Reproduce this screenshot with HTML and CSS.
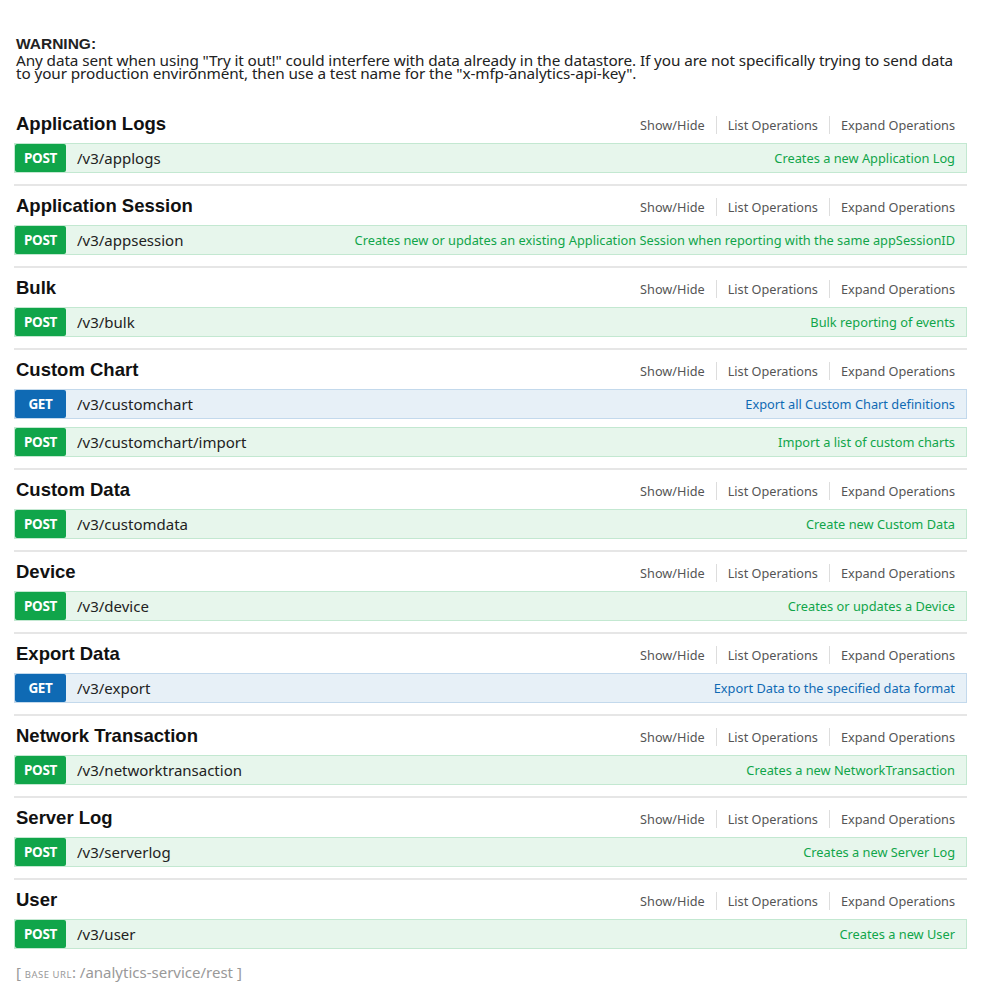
FILE: index.html
```html
<!DOCTYPE html>
<html>
<head>
<meta charset="utf-8">
<link rel="stylesheet" href="styles.css">
<title>API</title>
</head>
<body>
<div class="page">
  <div class="warning">
    <div class="warning-title">WARNING:</div>
    <div class="warning-text">Any data sent when using "Try it out!" could interfere with data already in the datastore. If you are not specifically trying to send data to your production environment, then use a test name for the "x-mfp-analytics-api-key".</div>
  </div>

  <ul class="resources">
    <li class="resource">
      <div class="res-head"><h2>Application Logs</h2><ul class="options"><li>Show/Hide</li><li>List Operations</li><li>Expand Operations</li></ul></div>
      <div class="op post"><span class="method">POST</span><span class="path">/v3/applogs</span><span class="desc">Creates a new Application Log</span></div>
    </li>
    <li class="resource">
      <div class="res-head"><h2>Application Session</h2><ul class="options"><li>Show/Hide</li><li>List Operations</li><li>Expand Operations</li></ul></div>
      <div class="op post"><span class="method">POST</span><span class="path">/v3/appsession</span><span class="desc">Creates new or updates an existing Application Session when reporting with the same appSessionID</span></div>
    </li>
    <li class="resource">
      <div class="res-head"><h2>Bulk</h2><ul class="options"><li>Show/Hide</li><li>List Operations</li><li>Expand Operations</li></ul></div>
      <div class="op post"><span class="method">POST</span><span class="path">/v3/bulk</span><span class="desc">Bulk reporting of events</span></div>
    </li>
    <li class="resource">
      <div class="res-head"><h2>Custom Chart</h2><ul class="options"><li>Show/Hide</li><li>List Operations</li><li>Expand Operations</li></ul></div>
      <div class="op get"><span class="method">GET</span><span class="path">/v3/customchart</span><span class="desc">Export all Custom Chart definitions</span></div>
      <div class="op post"><span class="method">POST</span><span class="path">/v3/customchart/import</span><span class="desc">Import a list of custom charts</span></div>
    </li>
    <li class="resource">
      <div class="res-head"><h2>Custom Data</h2><ul class="options"><li>Show/Hide</li><li>List Operations</li><li>Expand Operations</li></ul></div>
      <div class="op post"><span class="method">POST</span><span class="path">/v3/customdata</span><span class="desc">Create new Custom Data</span></div>
    </li>
    <li class="resource">
      <div class="res-head"><h2>Device</h2><ul class="options"><li>Show/Hide</li><li>List Operations</li><li>Expand Operations</li></ul></div>
      <div class="op post"><span class="method">POST</span><span class="path">/v3/device</span><span class="desc">Creates or updates a Device</span></div>
    </li>
    <li class="resource">
      <div class="res-head"><h2>Export Data</h2><ul class="options"><li>Show/Hide</li><li>List Operations</li><li>Expand Operations</li></ul></div>
      <div class="op get"><span class="method">GET</span><span class="path">/v3/export</span><span class="desc">Export Data to the specified data format</span></div>
    </li>
    <li class="resource">
      <div class="res-head"><h2>Network Transaction</h2><ul class="options"><li>Show/Hide</li><li>List Operations</li><li>Expand Operations</li></ul></div>
      <div class="op post"><span class="method">POST</span><span class="path">/v3/networktransaction</span><span class="desc">Creates a new NetworkTransaction</span></div>
    </li>
    <li class="resource">
      <div class="res-head"><h2>Server Log</h2><ul class="options"><li>Show/Hide</li><li>List Operations</li><li>Expand Operations</li></ul></div>
      <div class="op post"><span class="method">POST</span><span class="path">/v3/serverlog</span><span class="desc">Creates a new Server Log</span></div>
    </li>
    <li class="resource last">
      <div class="res-head"><h2>User</h2><ul class="options"><li>Show/Hide</li><li>List Operations</li><li>Expand Operations</li></ul></div>
      <div class="op post"><span class="method">POST</span><span class="path">/v3/user</span><span class="desc">Creates a new User</span></div>
    </li>
  </ul>

  <div class="base-url">[ <span class="small">BASE URL</span>: /analytics-service/rest ]</div>
</div>
</body>
</html>
```

FILE: styles.css
```css
* { box-sizing: border-box; }
html, body { margin: 0; padding: 0; background: #fff; }
body { font-family: "Noto Sans", "Open Sans", sans-serif; color: #333; }

.page {
  width: 953px;
  margin-left: 14px;
  padding-top: 36px;
}

.warning { padding-left: 2px; color: #222; }
.warning-title {
  font-family: "Liberation Sans", Arial, sans-serif;
  font-weight: bold;
  font-size: 15.5px;
  line-height: 15px;
  margin-bottom: 3px;
}
.warning-text {
  font-size: 15.3px;
  line-height: 13px;
  letter-spacing: -0.1px;
}

.resources { list-style: none; margin: 24px 0 0; padding: 0; }
.resource { border-bottom: 2px solid #e6e6e6; }
.resource.last { border-bottom: none; }

.res-head {
  height: 39px;
  display: flex;
  align-items: center;
  justify-content: space-between;
  padding-left: 2px;
}
.res-head h2 {
  margin: 0;
  font-family: "Liberation Sans", Arial, sans-serif;
  font-weight: bold;
  font-size: 18.5px;
  color: #111;
}
.options {
  list-style: none;
  margin: 2px 0 0;
  padding: 0 12px 0 0;
  display: flex;
  align-items: center;
  font-size: 12.7px;
  color: #555;
}
.options li { padding: 0 11px; border-left: 1px solid #ddd; line-height: 18px; }
.options li:first-child { border-left: none; }
.options li:last-child { padding-right: 0; }

.op {
  height: 30px;
  margin-bottom: 8px;
  display: flex;
  align-items: center;
  border: 1px solid;
}
.op:last-child { margin-bottom: 11px; }
.op.post { background: #e7f6ec; border-color: #c3e8d1; }
.op.get { background: #e7f0f7; border-color: #c3d9ec; }

.method {
  width: 51px;
  height: 28px;
  display: flex;
  align-items: center;
  justify-content: center;
  color: #fff;
  font-weight: bold;
  font-size: 13.5px;
  letter-spacing: -0.3px;
  border-radius: 2px;
}
.post .method { background: #10a54a; }
.get .method { background: #0f6ab4; }

.path {
  margin-left: 11px;
  font-size: 15px;
  color: #222;
}
.desc {
  margin-left: auto;
  padding-right: 11px;
  font-size: 12.8px;
}
.post .desc { color: #10a54a; }
.get .desc { color: #0f6ab4; }

.base-url {
  margin-top: 13px;
  padding-left: 2px;
  font-size: 15px;
  color: #999;
}
.base-url .small { font-size: 9.5px; text-transform: uppercase; letter-spacing: 0.5px; }
```
